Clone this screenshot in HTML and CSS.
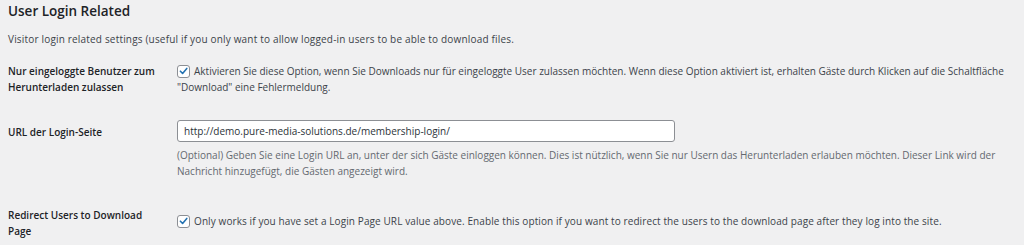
FILE: index.html
```html
<!DOCTYPE html>
<html lang="de">
<head>
<meta charset="utf-8">
<title>User Login Related</title>
<link rel="stylesheet" href="styles.css">
</head>
<body>
<div class="page">
  <h2 class="title">User Login Related</h2>
  <p class="intro">Visitor login related settings (useful if you only want to allow logged-in users to be able to download files.</p>

  <div class="form">
    <div class="row row-1">
      <div class="label">Nur eingeloggte Benutzer zum Herunterladen zulassen</div>
      <div class="field">
        <p class="check-text"><span class="checkbox"><svg viewBox="0 0 12 12" width="12" height="12"><path d="M2.6 6.2 L5 8.6 L9.6 3.2" fill="none" stroke="#2271b1" stroke-width="1.7" stroke-linecap="round" stroke-linejoin="round"/></svg></span>Aktivieren Sie diese Option, wenn Sie Downloads nur für eingeloggte User zulassen möchten. Wenn diese Option aktiviert ist, erhalten Gäste durch Klicken auf die Schaltfläche "Download" eine Fehlermeldung.</p>
      </div>
    </div>

    <div class="row row-2">
      <div class="label">URL der Login-Seite</div>
      <div class="field">
        <div class="input">http://demo.pure-media-solutions.de/membership-login/</div>
        <p class="desc">(Optional) Geben Sie eine Login URL an, unter der sich Gäste einloggen können. Dies ist nützlich, wenn Sie nur Usern das Herunterladen erlauben möchten. Dieser Link wird der Nachricht hinzugefügt, die Gästen angezeigt wird.</p>
      </div>
    </div>

    <div class="row row-3">
      <div class="label">Redirect Users to Download Page</div>
      <div class="field">
        <p class="check-text"><span class="checkbox"><svg viewBox="0 0 12 12" width="12" height="12"><path d="M2.6 6.2 L5 8.6 L9.6 3.2" fill="none" stroke="#2271b1" stroke-width="1.7" stroke-linecap="round" stroke-linejoin="round"/></svg></span>Only works if you have set a Login Page URL value above. Enable this option if you want to redirect the users to the download page after they log into the site.</p>
      </div>
    </div>
  </div>
</div>
</body>
</html>
```

FILE: styles.css
```css
html, body {
  margin: 0;
  padding: 0;
  background: #f0f0f1;
  overflow: hidden;
}
body {
  font-family: "Open Sans", "Noto Sans", sans-serif;
  font-size: 10px;
  color: #3c434a;
}
.page {
  padding: 0 8px;
}
.title {
  margin: 0;
  padding-top: 2px;
  font-size: 13.5px;
  font-weight: 600;
  line-height: 18px;
  color: #1d2327;
}
.intro {
  margin: 11px 0 0;
  line-height: 16px;
  color: #3c434a;
  letter-spacing: 0.18px;
}
.form {
  margin-top: 8px;
}
.row {
  display: grid;
  grid-template-columns: 169px 838px;
}
.row-1 {
  padding-top: 8px;
  height: 48px;
}
.row-2 {
  padding-top: 9px;
  height: 78px;
}
.row-3 {
  padding-top: 9px;
}
.label {
  font-weight: 600;
  color: #1d2327;
  line-height: 16px;
  padding-right: 20px;
}
.row-2 .label {
  padding-top: 4px;
}
.field p {
  margin: 0;
  line-height: 16px;
}
.checkbox {
  display: inline-flex;
  align-items: center;
  justify-content: center;
  width: 11px;
  height: 11px;
  border: 1px solid #8c8f94;
  border-radius: 3px;
  background: #fff;
  vertical-align: -2px;
  margin-right: 4px;
  box-sizing: content-box;
}
.row-3 .check-text {
  padding-top: 6px;
  letter-spacing: 0.1px;
}
.input {
  width: 484px;
  height: 20px;
  line-height: 20px;
  border: 1px solid #8c8f94;
  border-radius: 3px;
  background: #fff;
  padding: 0 6px;
  color: #2c3338;
}
.desc {
  margin-top: 5px !important;
  color: #646970;
}
```
